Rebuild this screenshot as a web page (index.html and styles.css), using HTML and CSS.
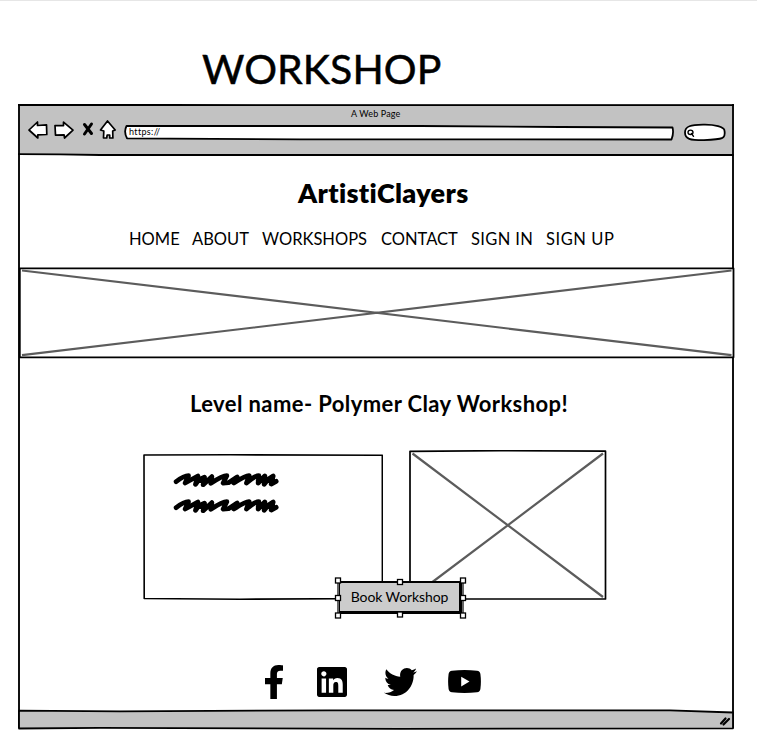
FILE: index.html
```
<!DOCTYPE html>
<html lang="en">
<head>
<meta charset="utf-8">
<title>Workshop</title>
<link rel="stylesheet" href="styles.css">
</head>
<body>
<h1 class="page-title">WORKSHOP</h1>
<div class="window">
  <header class="chrome">
    <svg class="chrome-lines" viewBox="18 104 716 52"><path d="M18 105H170L734 105.2M18 154.2L60 154.4 100 155H733"/></svg>
    <div class="chrome-title">A Web Page</div>
    <div class="toolbar">
      <svg class="tools" viewBox="26 118 94 24">
        <path d="M29 130l8.500-8v3.500l9-.7.300 9.700-9 .3v3.200z"/>
        <path d="M55 125.500l8.500.2v-3.500l9.500 8-8.500 7.800-.4-3.200-8.600.3z"/>
        <path d="M100.500 130l7-9 7.700 9-2.500 1 .2 7h-3.200v-3h-2.500l-.5 3-3.200-.2.300-6.800z"/>
        <path class="cross" d="M84.500 124.500l7 9M91.500 124l-7 10"/>
      </svg>
      <div class="address">
        <svg viewBox="124 124 551 17"><path d="M126.500 126H420L560 127 672.500 127.500Q674 133 671.500 139.500L300 139.300 127 138.300Q123.500 132 126.500 126z"/></svg>
        <span>https://</span>
      </div>
      <svg class="search" viewBox="683 123 44 19">
        <path d="M685 132.500C685 126 691 125 703 124.700S724 127 724.500 130.500C726 139 723 139.300 704 140.200 690 140.300 685 139 685 132.500z"/>
        <ellipse cx="690.500" cy="132.300" rx="2.500" ry="2.200"/><path d="M691.500 133.500l2 2.800"/>
      </svg>
    </div>
  </header>
  <main>
    <h2 class="brand">ArtistiClayers</h2>
    <nav>
      <a>HOME</a><a>ABOUT</a><a>WORKSHOPS</a><a>CONTACT</a><a class="wide">SIGN IN</a><a class="wider">SIGN UP</a>
    </nav>
    <svg class="banner" viewBox="18 266 717 93">
      <rect x="19.800" y="268.300" width="713.700" height="89"/>
      <path d="M22 270.500L731.500 355.200M22 355.200L731.500 270.500"/>
    </svg>
    <h3 class="level">Level name- Polymer Clay Workshop!</h3>
    <section class="cards">
      <div class="card">
        <svg class="outline" viewBox="143 454 240 146"><path d="M144 455L230 454.800 382.300 455.200 382.400 598.500 240 599.200 144.200 598.500z"/></svg>
        <svg class="scribble" viewBox="130 98 320 48"><path d="M139 127Q162 109 176 109L166 131 204 110 197 135 206 122 224 114 220 136 232 125 246 112 243 132Q278 109 291 109L280 131 296 130 322 113 312 131Q348 108 358 109L350 131Q375 109 387 109L385 131 405 110 403 135 415 120 430 110 424 134 439 126M200 124H245M385 124H430"/></svg>
        <svg class="scribble" viewBox="130 98 320 48"><path d="M139 127Q162 109 176 109L166 131 204 110 197 135 206 122 224 114 220 136 232 125 246 112 243 132Q278 109 291 109L280 131 296 130 322 113 312 131Q348 108 358 109L350 131Q375 109 387 109L385 131 405 110 403 135 415 120 430 110 424 134 439 126M200 124H245M385 124H430"/></svg>
      </div>
      <svg class="photo" viewBox="408 450 199 150">
        <path class="frame" d="M410 451.300L500 450.700 605.500 451.200 605.500 599H410z"/>
        <path d="M412.500 453.500L603 597M603 453.500L412.500 597"/>
      </svg>
      <button class="book">Book Workshop
        <svg class="handles" viewBox="334 577 133 42">
          <path class="sel" d="M338 580.500V615.500M463 580.500V615.500"/>
          <rect x="335.500" y="578" width="5" height="5"/><rect x="397.500" y="579.500" width="5" height="5"/><rect x="460.500" y="578" width="5" height="5"/>
          <rect x="335.500" y="595.500" width="5" height="5"/><rect x="460.500" y="595.500" width="5" height="5"/>
          <rect x="335.500" y="613" width="5" height="5"/><rect x="397.500" y="612" width="5" height="5"/><rect x="460.500" y="613" width="5" height="5"/>
        </svg>
      </button>
    </section>
    <div class="social">
      <svg class="facebook" viewBox="22.900 0 274.200 512" preserveAspectRatio="none"><path d="M279.140 288l14.220-92.660h-88.910v-60.130c0-25.350 12.420-50.060 52.240-50.060h40.420V6.260S260.430 0 225.360 0c-73.220 0-121.080 44.380-121.080 124.720v70.620H22.890V288h81.390v224h100.170V288z"/></svg>
      <svg class="linkedin" viewBox="0 32 448 448"><path d="M416 32H31.900C14.300 32 0 46.500 0 64.300v383.400C0 465.500 14.300 480 31.900 480H416c17.600 0 32-14.500 32-32.300V64.300c0-17.800-14.400-32.300-32-32.300zM135.400 416H69V202.200h66.500V416zm-33.200-243c-21.300 0-38.500-17.300-38.500-38.500S80.900 96 102.200 96c21.200 0 38.500 17.300 38.500 38.500 0 21.300-17.200 38.500-38.500 38.500zm282.100 243h-66.400V312c0-24.800-.5-56.700-34.500-56.700-34.600 0-39.900 27-39.900 54.900V416h-66.400V202.200h63.700v29.200h.9c8.900-16.800 30.600-34.500 62.900-34.500 67.200 0 79.700 44.300 79.700 101.900V416z"/></svg>
      <svg class="twitter" viewBox="0 48 512 416" preserveAspectRatio="none"><path d="M459.370 151.716c.325 4.548.325 9.097.325 13.645 0 138.720-105.583 298.558-298.558 298.558-59.452 0-114.680-17.219-161.137-47.106 8.447.974 16.568 1.299 25.340 1.299 49.055 0 94.213-16.568 130.274-44.832-46.132-.975-84.792-31.188-98.112-72.772 6.498.974 12.995 1.624 19.818 1.624 9.421 0 18.843-1.300 27.614-3.573-48.081-9.747-84.143-51.980-84.143-102.985v-1.299c13.969 7.797 30.214 12.670 47.431 13.319-28.264-18.843-46.781-51.005-46.781-87.391 0-19.492 5.197-37.360 14.294-52.954 51.655 63.675 129.300 105.258 216.365 109.807-1.624-7.797-2.599-15.918-2.599-24.040 0-57.828 46.782-104.934 104.934-104.934 30.213 0 57.502 12.670 76.670 33.137 23.715-4.548 46.456-13.320 66.599-25.340-7.798 24.366-24.366 44.833-46.132 57.827 21.117-2.273 41.584-8.122 60.426-16.243-14.292 20.791-32.161 39.308-52.628 54.253z"/></svg>
      <svg class="youtube" viewBox="0 0 33 23"><path fill-rule="evenodd" d="M4 .7Q16.500-.5 29 .7 32 1 32.400 4 33.400 11.500 32.400 19 32 22 29 22.300 16.500 23.500 4 22.300 1 22 .6 19-.4 11.500.6 4 1 1 4 .7zM13.200 6.700v9.700l8.300-4.900z"/></svg>
    </div>
  </main>
  <footer>
    <svg viewBox="18 708 716 22"><path class="fill" d="M19 710.700L120 711.300 330 710.300 670 710.300 733 712.500V728.300L400 728.800 100 727.800 19 728.500z"/><path class="grip" d="M721 723.500l4.500-5M723.500 724.500l5.500-5.500"/></svg>
  </footer>
</div>
</body>
</html>
```
FILE: styles.css
```
* { box-sizing: border-box; }
body {
  margin: 0;
  height: 753px;
  overflow: hidden;
  background: #fff;
  border-top: 1px solid #e6e6e6;
  color: #000;
  font-family: Lato, "Liberation Sans", sans-serif;
}
svg { display: block; fill: none; stroke: #000; stroke-width: 1.8; stroke-linejoin: round; stroke-linecap: round; }
h1, h2, h3 { margin: 0; white-space: nowrap; }
.page-title {
  height: 103px;
  padding: 43px 0 0 202px;
  font-size: 41px;
  line-height: 50px;
  font-weight: 400;
  letter-spacing: .1px;
  -webkit-text-stroke: .5px #000;
}
.window {
  position: relative;
  width: 716px;
  height: 624px;
  margin-left: 18px;
  border: solid #111;
  border-width: 0 2px;
}
.chrome { position: relative; height: 51px; background: #c2c2c2; }
.chrome-lines { position: absolute; left: -2px; top: 0; width: 716px; height: 52px; }
.chrome-title { height: 14px; padding: 4px 0 0 331px; font-size: 9px; line-height: 12px; letter-spacing: .15px; }
.toolbar { display: flex; align-items: flex-start; padding-left: 6px; }
.tools { width: 94px; height: 24px; fill: #fff; stroke-width: 1.7; }
.tools .cross { stroke-width: 3; }
.address { position: relative; width: 551px; height: 17px; margin: 6px 0 0 4px; font-size: 9px; line-height: 16px; }
.address svg { width: 551px; height: 17px; fill: #fff; }
.address span { position: absolute; left: 5px; top: 0; letter-spacing: .35px; }
.search { width: 44px; height: 19px; margin: 5px 0 0 8px; fill: #fff; }
.search ellipse, .search ellipse + path { stroke-width: 1.4; }
main { height: 553px; }
.brand { padding: 21px 0 0 278px; height: 71px; font-size: 27px; line-height: 34px; font-weight: 800; letter-spacing: .35px; }
nav {
  display: grid;
  grid-template-columns: 63px 70px 119px 90px 75px 75px;
  height: 40px;
  padding: 0 0 0 109px;
  font-size: 16.500px;
  line-height: 27px;
  white-space: nowrap;
}
nav .wide { letter-spacing: .35px; }
nav .wider { letter-spacing: .55px; }
.banner { width: 717px; height: 93px; margin-left: -2px; }
.banner path, .photo path { stroke: #5c5c5c; stroke-width: 2.200; stroke-linecap: butt; }
.banner rect { fill: #fff; }
.level { height: 91px; padding: 31px 0 0 170px; font-size: 22px; line-height: 28px; font-weight: 700; letter-spacing: .4px; }
.cards { position: relative; display: flex; align-items: flex-end; gap: 25px; height: 150px; padding-left: 123px; }
.card { position: relative; width: 240px; height: 146px; padding: 18px 0 0 30px; }
.outline { position: absolute; left: 0; top: 0; width: 240px; height: 146px; stroke-width: 1.6; }
.scribble { width: 107px; height: 16px; margin-bottom: 10px; stroke-width: 14.500; overflow: visible; }
.photo { width: 199px; height: 150px; }
.photo .frame { stroke: #000; stroke-width: 1.7; }
.book {
  position: absolute;
  left: 319px;
  top: 131px;
  width: 123px;
  height: 33px;
  padding: 0 0 1px;
  border: 2px solid #000;
  border-width: 2px 3px 3px 1px;
  background: #ccc;
  color: #000;
  font: 14px/26px Lato, "Liberation Sans", sans-serif;
  letter-spacing: -.1px;
  white-space: nowrap;
}
.handles { position: absolute; left: -6px; top: -6px; width: 133px; height: 42px; fill: #fff; stroke-width: 1.3; stroke-linejoin: miter; }
.handles .sel { stroke: #333; stroke-width: 1.5; }
.social { display: flex; padding: 65px 0 0 245px; }
.social svg { fill: #000; stroke: none; }
.facebook { width: 18px; height: 34px; }
.linkedin { width: 30px; height: 30px; margin: 2px 0 0 34px; }
.twitter { width: 33px; height: 28px; margin: 3px 0 0 37px; }
.youtube { width: 33px; height: 23px; margin: 5px 0 0 31px; }
footer { height: 22px; margin: 0 -2px; }
footer svg { width: 716px; height: 22px; }
footer .fill { fill: #c2c2c2; }
footer .grip { stroke-width: 2.200; }
```
